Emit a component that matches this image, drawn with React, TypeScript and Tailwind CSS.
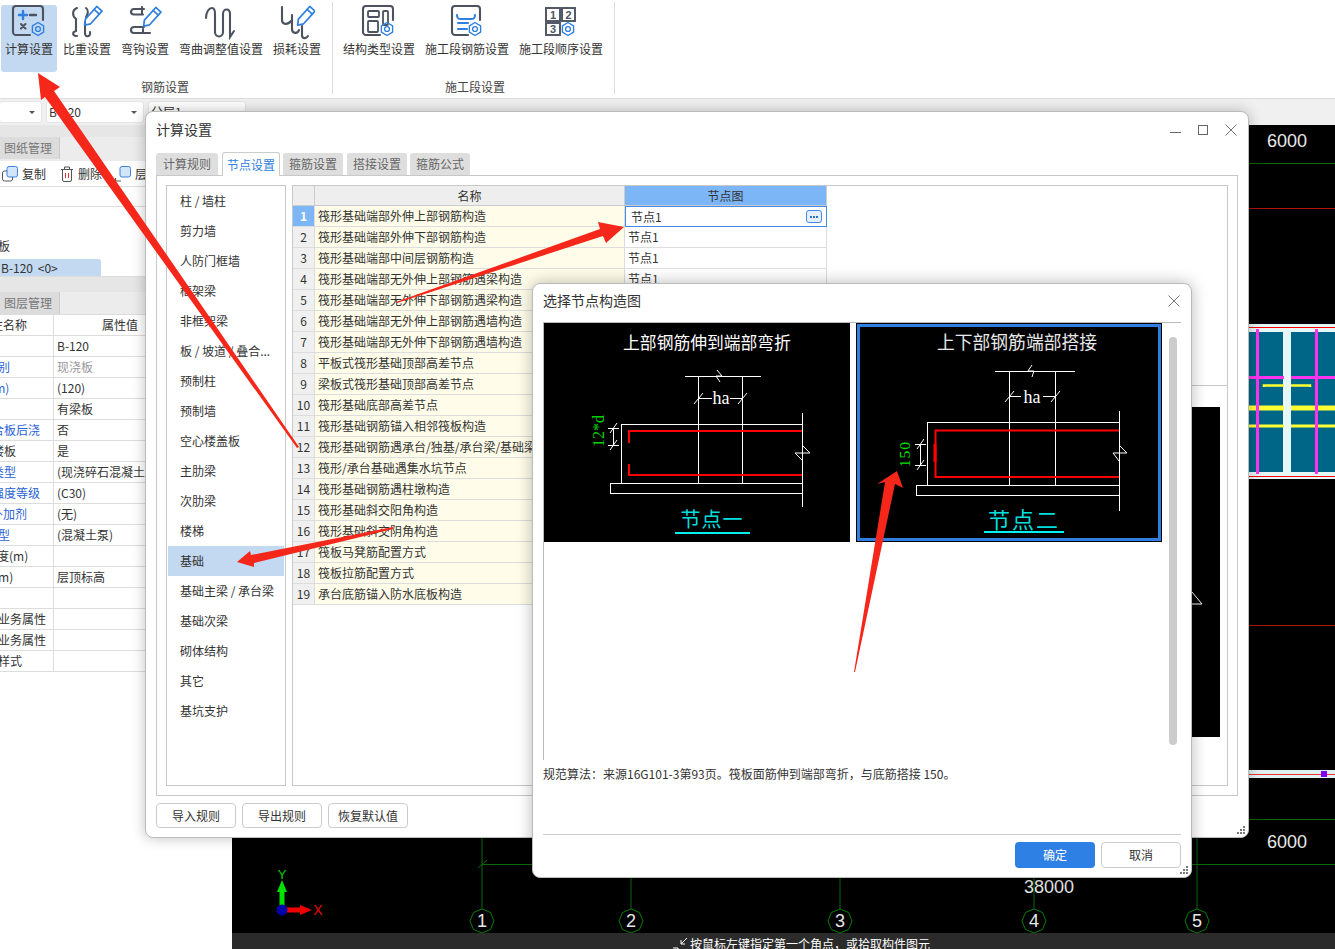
import React from 'react';

const STROKE = '#4d5261';
const BLUE = '#2f7fe0';

const Gear: React.FC<{ x: number; y: number }> = ({ x, y }) => (
    <g transform={`translate(${x} ${y})`} fill="none" stroke={BLUE} strokeWidth="1.4">
        <polygon points="0,-6.5 5.6,-3.2 5.6,3.2 0,6.5 -5.6,3.2 -5.6,-3.2" strokeLinejoin="round" />
        <circle r="2.4" />
    </g>
);

const Pencil: React.FC<{ x: number; y: number }> = ({ x, y }) => (
    <g transform={`translate(${x} ${y}) rotate(42)`} fill="none" stroke={BLUE} strokeWidth="1.7" strokeLinejoin="round">
        <path d="M-3.5 -11 L3.5 -11 L3.5 6 L0 11 L-3.5 6 Z" />
        <path d="M-3.5 -7 L3.5 -7" />
    </g>
);

const Svg: React.FC<{ children: React.ReactNode }> = ({ children }) => (
    <svg width="36" height="36" viewBox="0 0 36 36" fill="none" stroke={STROKE} strokeWidth="2.1" strokeLinecap="round">
        {children}
    </svg>
);

const CalcIcon = () => (
    <Svg>
        <path d="M19 30 H5 a3 3 0 0 1 -3 -3 V4 a3 3 0 0 1 3 -3 H29 a3 3 0 0 1 3 3 V15" />
        <path d="M8 10 H16 M12 6 V14" stroke={BLUE} strokeWidth="2.4" />
        <path d="M19 10 H25" strokeWidth="2.4" />
        <path d="M10 19 L14.5 23.5 M14.5 19 L10 23.5" />
        <Gear x={27} y={24} />
    </Svg>
);

const WeightIcon = () => (
    <Svg>
        <path d="M8 3 C3 5 3 11 7 14 V26 C3 27 3 31 8 31" />
        <path d="M17 3 C20 5 19 9 17 12 M16 17 V28 C16 33 22 32 21 27" />
        <Pencil x={23} y={12} />
    </Svg>
);

const HookIcon = () => (
    <Svg>
        <path d="M17 4 H7 C3 4 3 9.5 7 9.5 H16 M15 2 V9" />
        <path d="M17 22 H7 C3 22 3 28 7 28 H23 M16 24 V28" />
        <Pencil x={24} y={13} />
    </Svg>
);

const BendIcon = () => (
    <Svg>
        <path d="M3 13 C3 7 6 3 9 3 C12 3 12 7 12 9 V27 C12 33 20 33 20 27 V9 C20 3 27 3 27 9 V32 L31 26" />
    </Svg>
);

const LossIcon = () => (
    <Svg>
        <path d="M3 2 V15 C3 20 9 20 12 16 M13 10 V24 C13 29 19 29 20 25 M23 21 V30 C23 34 27 34 29 31" />
        <Pencil x={26} y={12} />
    </Svg>
);

const StructIcon = () => (
    <Svg>
        <path d="M19 30 H5 a3 3 0 0 1 -3 -3 V4 a3 3 0 0 1 3 -3 H29 a3 3 0 0 1 3 3 V15" />
        <rect x="7" y="6" width="11" height="6" rx="1" strokeWidth="1.8" />
        <rect x="22" y="6" width="5" height="14" rx="1" strokeWidth="1.8" />
        <rect x="7" y="16" width="10" height="11" rx="1" strokeWidth="1.8" />
        <Gear x={26} y={24} />
    </Svg>
);

const SegmentIcon = () => (
    <Svg>
        <path d="M19 30 H6 a3 3 0 0 1 -3 -3 V4 a3 3 0 0 1 3 -3 H28 a3 3 0 0 1 3 3 V15" />
        <path d="M8 10 C8 14 10 14 12 14 H22 C24 14 26 14 26 10" stroke={BLUE} />
        <path d="M9 18 H19 M9 24 H18" stroke={BLUE} />
        <Gear x={26} y={24} />
    </Svg>
);

const OrderIcon = () => (
    <Svg>
        <g strokeWidth="1.9" strokeLinecap="butt">
            <rect x="3" y="3" width="14" height="13" />
            <rect x="19" y="3" width="13" height="13" />
            <rect x="3" y="18" width="14" height="12" />
        </g>
        <g fill={STROKE} stroke="none" fontSize="11" fontWeight="700" textAnchor="middle" fontFamily="'Liberation Sans', sans-serif">
            <text x="10" y="13.5">1</text>
            <text x="25.5" y="13.5">2</text>
            <text x="10" y="28">3</text>
        </g>
        <Gear x={25} y={24} />
    </Svg>
);

const RibbonButton: React.FC<{ label: string; active?: boolean; icon: React.ReactNode }> = ({ label, active, icon }) => (
    <div className={`flex h-[67px] flex-col items-center rounded-[3px] px-1 ${active ? 'bg-[#c2d9f1]' : ''}`}>
        <div className="flex h-[36px] items-center justify-center">{icon}</div>
        <span className="text-[12px] leading-4 whitespace-nowrap text-[#333]">{label}</span>
    </div>
);

const RibbonGroup: React.FC<{ label: string; children: React.ReactNode }> = ({ label, children }) => (
    <div className="flex flex-col pt-[5px]">
        <div className="flex gap-[2px]">{children}</div>
        <div className="mt-[7px] pl-[4px] text-center text-[12px] leading-4 text-[#444]">{label}</div>
    </div>
);

const Ribbon = () => (
    <div className="flex h-[98px] bg-white pl-[1px]">
        <RibbonGroup label="钢筋设置">
            <RibbonButton label="计算设置" active icon={<CalcIcon />} />
            <RibbonButton label="比重设置" icon={<WeightIcon />} />
            <RibbonButton label="弯钩设置" icon={<HookIcon />} />
            <RibbonButton label="弯曲调整值设置" icon={<BendIcon />} />
            <RibbonButton label="损耗设置" icon={<LossIcon />} />
        </RibbonGroup>
        <div className="mx-[7px] mt-[2px] h-[92px] w-px bg-[#ddd]" />
        <div className="mr-[-1px]" />
        <RibbonGroup label="施工段设置">
            <RibbonButton label="结构类型设置" icon={<StructIcon />} />
            <RibbonButton label="施工段钢筋设置" icon={<SegmentIcon />} />
            <RibbonButton label="施工段顺序设置" icon={<OrderIcon />} />
        </RibbonGroup>
        <div className="mx-[7px] mt-[2px] h-[92px] w-px bg-[#ddd]" />
    </div>
);

const SelectBox: React.FC<{ text: string; width: string }> = ({ text, width }) => (
    <div className={`flex h-[22px] items-center justify-between rounded-[3px] border border-[#e4e4e4] bg-white pr-[6px] pl-[2px] text-[12px] text-[#333] ${width}`}>
        <span>{text}</span>
        <span className="h-0 w-0 border-x-[3px] border-t-[3px] border-x-transparent border-t-[#555]" />
    </div>
);

const Toolbar = () => (
    <div className="flex h-[27px] items-start gap-[4px] border-t border-[#ddd] bg-[#f0f0f0] pt-[2px]">
        <SelectBox text="" width="w-[43px] -ml-px" />
        <SelectBox text="B-120" width="w-[98px]" />
        <SelectBox text="分层1" width="w-[98px]" />
    </div>
);

const attrRows: { label: string; labelClass: string; blue?: boolean; value: string; gray?: boolean }[] = [
    { label: '', labelClass: '', value: 'B-120' },
    { label: '类别', labelClass: '-ml-[14px]', blue: true, value: '现浇板', gray: true },
    { label: '厚度(mm)', labelClass: '-ml-[45px]', blue: true, value: '(120)' },
    { label: '', labelClass: '', value: '有梁板' },
    { label: '叠合板后浇', labelClass: '-ml-[20px]', blue: true, value: '否' },
    { label: '楼板', labelClass: '-ml-[8px]', value: '是' },
    { label: '类型', labelClass: '-ml-[8px]', blue: true, value: '(现浇碎石混凝土' },
    { label: '强度等级', labelClass: '-ml-[8px]', blue: true, value: '(C30)' },
    { label: '外加剂', labelClass: '-ml-[9px]', blue: true, value: '(无)' },
    { label: '泵型', labelClass: '-ml-[14px]', blue: true, value: '(混凝土泵)' },
    { label: '高度(m)', labelClass: '-ml-[15px]', value: '' },
    { label: '标高(m)', labelClass: '-ml-[30px]', value: '层顶标高' },
    { label: '', labelClass: '', value: '' },
    { label: '业务属性', labelClass: '-ml-[2px]', value: '' },
    { label: '业务属性', labelClass: '-ml-[2px]', value: '' },
    { label: '样式', labelClass: '-ml-[2px]', value: '' },
];

const LeftPanel = () => (
    <div className="flex w-[232px] shrink-0 flex-col bg-white text-[12px] text-[#333]">
        <div className="h-[12px] bg-[#e6e6e6]" />
        <div className="h-[24px] bg-[#ececec]">
            <div className="flex h-[22px] w-[60px] items-center border-r border-[#ccc] bg-[#dcdcdc] pl-[4px] text-[#777]">图纸管理</div>
        </div>
        <div className="flex h-[26px] items-center border-b border-[#ddd]">
            <svg className="ml-[2px]" width="16" height="16" viewBox="0 0 16 16">
                <rect x="0.5" y="5" width="10" height="10" rx="2" fill="#fff" stroke="#555" />
                <rect x="5" y="0.5" width="10.5" height="10.5" rx="2" fill="#d2e5fb" stroke="#3b82d8" />
            </svg>
            <span className="ml-[4px]">复制</span>
            <svg className="ml-[14px]" width="14" height="16" viewBox="0 0 14 16" fill="none" stroke="#555">
                <path d="M1 3.5 H13 M4.5 3 V1 H9.5 V3 M2.5 4 V14 a1.5 1.5 0 0 0 1.5 1.5 H10 a1.5 1.5 0 0 0 1.5 -1.5 V4" />
                <path d="M5.5 7 V12 M8.5 7 V12" stroke="#d33" />
            </svg>
            <span className="ml-[4px]">删除</span>
            <svg className="ml-[13px]" width="16" height="16" viewBox="0 0 16 16">
                <path d="M0.5 12 V15 H6" fill="none" stroke="#555" />
                <rect x="5" y="0.5" width="10.5" height="10.5" rx="2" fill="#d2e5fb" stroke="#3b82d8" />
            </svg>
            <span className="ml-[4px]">层</span>
        </div>
        <div className="h-[20px] border-b border-[#ddd]" />
        <div className="flex h-[69px] flex-col justify-end">
            <div className="mb-[5px] -ml-[2px] leading-4">板</div>
            <div className="flex h-[17px] w-[101px] items-center rounded-tr-[3px] bg-[#c2d9f1]">
                <span className="ml-[1px] whitespace-nowrap [word-spacing:2px]">B-120 &lt;0&gt;</span>
            </div>
        </div>
        <div className="h-[16px] border-t border-[#ddd] bg-[#e6e6e6]" />
        <div className="h-[22px] bg-[#ececec]">
            <div className="flex h-[22px] w-[60px] items-center border-r border-[#ccc] bg-[#dcdcdc] pl-[4px] text-[#777]">图层管理</div>
        </div>
        <div className="flex h-[22px] border-y border-[#ddd]">
            <div className="flex w-[54px] items-center overflow-hidden border-r border-[#ddd]">
                <span className="-ml-[21px] whitespace-nowrap">属性名称</span>
            </div>
            <div className="flex w-[118px] items-center pl-[48px]">属性值</div>
        </div>
        {attrRows.map((r, i) => (
            <div key={i} className="flex h-[21px] border-b border-[#ddd]">
                <div className="flex w-[54px] items-center overflow-hidden border-r border-[#ddd]">
                    <span className={`whitespace-nowrap ${r.labelClass} ${r.blue ? 'text-[#2a62d8]' : ''}`}>{r.label}</span>
                </div>
                <div className={`flex items-center pl-[3px] whitespace-nowrap ${r.gray ? 'text-[#999]' : ''}`}>{r.value}</div>
            </div>
        ))}
    </div>
);

const Bubble: React.FC<{ x: number; n: number; top: number }> = ({ x, n, top }) => (
    <g>
        <path d={`M${x} ${top} V909`} stroke="#0a6a0a" />
        <polygon
            points={`${x},909 ${x + 8.5},912.5 ${x + 12},921 ${x + 8.5},929.5 ${x},933 ${x - 8.5},929.5 ${x - 12},921 ${x - 8.5},912.5`}
            fill="#000"
            stroke="#0a7a0a"
        />
        <text x={x} y={927} textAnchor="middle" fontSize="18" fill="#e8e8e8" fontFamily="'Liberation Sans', sans-serif">{n}</text>
    </g>
);

const CanvasDrawing = () => (
    <svg className="block h-[808px] w-full" viewBox="232 125 1103 808">
        <rect x="232" y="125" width="1103" height="808" fill="#000" />
        <g fontFamily="'Liberation Sans', sans-serif" fontSize="18" fill="#e8e8e8">
            <text x="1267" y="147">6000</text>
            <text x="1267" y="848">6000</text>
            <text x="1024" y="893">38000</text>
        </g>
        <path d="M1249 163.5 H1335 M1249 819.5 H1335 M482 864.5 H1335" stroke="#0a6a0a" />
        <path d="M478 868 L487 860" stroke="#0a6a0a" />
        <path d="M1249 208.5 H1335 M1249 625.5 H1335" stroke="#b01010" />
        {/* beam band */}
        <rect x="1249" y="324" width="86" height="155" fill="#e6f7f7" />
        <rect x="1249" y="332" width="34" height="140" fill="#006688" />
        <rect x="1291" y="332" width="44" height="140" fill="#006688" />
        <path d="M1249 327.5 H1335 M1249 476.5 H1335" stroke="#f00" />
        <path d="M1249 377.5 H1335" stroke="#ff33ee" strokeWidth="3" />
        <path d="M1264 387 V385.5 H1310 V387" fill="none" stroke="#ffff33" strokeWidth="2.5" />
        <path d="M1249 408 H1335" stroke="#ffff33" strokeWidth="5" />
        <path d="M1249 426 H1335" stroke="#ffff33" strokeWidth="3" />
        <rect x="1284" y="332" width="7" height="140" fill="#e6f7f7" />
        <path d="M1257.5 329 V474 M1316.5 329 V474" stroke="#ff33ee" strokeWidth="3" />
        {/* lower band */}
        <rect x="1249" y="770" width="86" height="8" fill="#dff0f0" />
        <path d="M1249 774.5 H1335" stroke="#f03030" />
        <rect x="1321" y="771" width="6" height="6" fill="#8000ff" />
        <Bubble x={482} n={1} top={838} />
        <Bubble x={631} n={2} top={878} />
        <Bubble x={840} n={3} top={878} />
        <Bubble x={1034} n={4} top={878} />
        <Bubble x={1197} n={5} top={838} />
        {/* axes */}
        <path d="M282 910 V888" stroke="#00e000" strokeWidth="5" />
        <polygon points="282,880 277,892 287,892" fill="#00e000" />
        <path d="M282 910 H304" stroke="#f00000" strokeWidth="5" />
        <polygon points="312,910 300,905 300,915" fill="#f00000" />
        <circle cx="282" cy="910" r="5.5" fill="#0000a8" />
        <text x="282" y="879" textAnchor="middle" fontSize="13" fill="#00d000" fontFamily="'Liberation Sans', sans-serif">Y</text>
        <text x="318" y="915" textAnchor="middle" fontSize="14" fill="#f00000" fontFamily="'Liberation Sans', sans-serif">X</text>
    </svg>
);

const tabs = [
    { label: '计算规则', cls: 'w-[62px]' },
    { label: '节点设置', cls: 'ml-[4px] w-[58px]' },
    { label: '箍筋设置', cls: 'ml-[3px] w-[60px]' },
    { label: '搭接设置', cls: 'ml-[4px] w-[60px]' },
    { label: '箍筋公式', cls: 'ml-[3px] w-[60px]' },
];
const categories = ['柱 / 墙柱', '剪力墙', '人防门框墙', '框架梁', '非框架梁', '板 / 坡道 / 叠合...', '预制柱', '预制墙', '空心楼盖板', '主肋梁', '次肋梁', '楼梯', '基础', '基础主梁 / 承台梁', '基础次梁', '砌体结构', '其它', '基坑支护'];
const nodes = [
    '筏形基础端部外伸上部钢筋构造', '筏形基础端部外伸下部钢筋构造', '筏形基础端部中间层钢筋构造', '筏形基础端部无外伸上部钢筋遇梁构造',
    '筏形基础端部无外伸下部钢筋遇梁构造', '筏形基础端部无外伸上部钢筋遇墙构造', '筏形基础端部无外伸下部钢筋遇墙构造', '平板式筏形基础顶部高差节点',
    '梁板式筏形基础顶部高差节点', '筏形基础底部高差节点', '筏形基础钢筋锚入相邻筏板构造', '筏形基础钢筋遇承台/独基/承台梁/基础梁构造',
    '筏形/承台基础遇集水坑节点', '筏形基础钢筋遇柱墩构造', '筏形基础斜交阳角构造', '筏形基础斜交阴角构造', '筏板马凳筋配置方式', '筏板拉筋配置方式', '承台底筋锚入防水底板构造',
];

const CloseX: React.FC<{ size?: number }> = ({ size = 12 }) => (
    <svg width={size} height={size} viewBox="0 0 12 12" stroke="#777" strokeWidth="1">
        <path d="M0.5 0.5 L11.5 11.5 M11.5 0.5 L0.5 11.5" />
    </svg>
);

const Grip = () => (
    <svg className="absolute right-[2px] bottom-[2px]" width="9" height="9" viewBox="0 0 9 9" fill="#777">
        <rect x="6" y="0" width="2" height="2" />
        <rect x="3" y="3" width="2" height="2" />
        <rect x="6" y="3" width="2" height="2" />
        <rect x="0" y="6" width="2" height="2" />
        <rect x="3" y="6" width="2" height="2" />
        <rect x="6" y="6" width="2" height="2" />
    </svg>
);

const FooterButton: React.FC<{ label: string; primary?: boolean }> = ({ label, primary }) => (
    <button className={`flex w-[80px] items-center justify-center rounded-[4px] text-[12px] ${primary ? 'bg-[#2f80e4] text-white' : 'border border-[#ccc] bg-white text-[#333]'}`}>
        {label}
    </button>
);

const NodeTable = () => (
    <div className="w-[534px] shrink-0 text-[12px] text-[#333]">
        <div className="flex h-[20px]">
            <div className="w-[22px] border-r border-b border-[#ccc] bg-[#eee]" />
            <div className="flex w-[310px] items-center justify-center border-r border-b border-[#ccc] bg-[#eee]">名称</div>
            <div className="flex w-[202px] items-center justify-center border-r border-b border-[#ccc] bg-[#7db6f6]">节点图</div>
        </div>
        {nodes.map((name, i) => (
            <div key={name} className="flex h-[21px]">
                <div className={`flex w-[22px] items-center justify-center border-r border-b border-[#ddd] ${i === 0 ? 'bg-[#7db6f6] font-bold text-white' : 'bg-[#f0f0f0]'}`}>{i + 1}</div>
                <div className="flex w-[310px] items-center overflow-hidden border-r border-b border-[#ddd] bg-[#fffde9] pl-[3px] whitespace-nowrap">{name}</div>
                {i === 0 ? (
                    <div className="flex w-[202px] items-center justify-between border border-[#3f8ae6] bg-white pr-[4px] pl-[5px]">
                        <span>节点1</span>
                        <span className="flex h-[13px] w-[16px] items-center justify-center gap-px rounded-[3px] border border-[#3f8ae6] bg-[#e6f0fc]">
                            <span className="h-[2px] w-[2px] bg-[#2f6fc0]" />
                            <span className="h-[2px] w-[2px] bg-[#2f6fc0]" />
                            <span className="h-[2px] w-[2px] bg-[#2f6fc0]" />
                        </span>
                    </div>
                ) : (
                    <div className="flex w-[202px] items-center border-r border-b border-[#ddd] bg-white pl-[3px]">节点1</div>
                )}
            </div>
        ))}
    </div>
);

const SettingsDialog = () => (
    <div className="absolute top-[111px] left-[145px] flex h-[727px] w-[1104px] flex-col rounded-[8px] border border-[#bbb] bg-white px-[10px] text-[12px] text-[#333] shadow-[0_0_14px_rgba(0,0,0,0.25)]">
        <div className="flex h-[35px] shrink-0 items-center justify-between pr-[1px]">
            <span className="text-[14px]">计算设置</span>
            <div className="flex items-center gap-[17px]">
                <span className="mt-[6px] h-px w-[11px] bg-[#666]" />
                <span className="h-[10px] w-[10px] border border-[#666]" />
                <CloseX />
            </div>
        </div>
        <div className="flex h-[28px] shrink-0 items-end">
            {tabs.map((t, i) => (
                <div
                    key={t.label}
                    className={
                        i === 1
                            ? `relative top-px z-10 flex h-[24px] items-center justify-center rounded-t-[3px] border-x border-t border-[#ccc] bg-white text-[#2f7fe0] ${t.cls}`
                            : `flex h-[22px] items-center justify-center rounded-t-[3px] bg-[#dedede] text-[#666] ${t.cls}`
                    }
                >
                    {t.label}
                </div>
            ))}
        </div>
        <div className="flex h-[621px] shrink-0 gap-[6px] border border-[#c8c8c8] p-[9px]">
            <div className="flex w-[120px] shrink-0 flex-col border border-[#c8c8c8] px-px">
                {categories.map(c => (
                    <div key={c} className={`flex h-[30px] shrink-0 items-center pl-[12px] whitespace-nowrap ${c === '基础' ? 'bg-[#c2d9f1]' : ''}`}>{c}</div>
                ))}
            </div>
            <div className="flex flex-1 border border-[#c8c8c8]">
                <NodeTable />
                <div className="flex flex-1 flex-col">
                    <div className="h-[200px] border-b border-[#c8c8c8]" />
                    <div className="mt-[21px] mr-[7px] ml-[13px] h-[330px] bg-black">
                        <svg className="block h-full w-full" viewBox="840 408 380 330">
                            <path d="M1192 593 L1202 605 H1192" fill="none" stroke="#fff" />
                        </svg>
                    </div>
                </div>
            </div>
        </div>
        <div className="mt-[7px] flex h-[25px] shrink-0 gap-[6px]">
            <FooterButton label="导入规则" />
            <FooterButton label="导出规则" />
            <FooterButton label="恢复默认值" />
        </div>
        <Grip />
    </div>
);

const serif = "'Liberation Serif', serif";
const cjk = "'Noto Sans CJK SC', sans-serif";

// 节点示意图，坐标以图片左上角为原点
const NodeOne = () => (
    <svg className="block" width="306" height="219" viewBox="0 0 306 219">
        <rect width="306" height="219" fill="#000" />
        <text x="163" y="26" textAnchor="middle" fontSize="16.8" fill="#fff" fontFamily={cjk}>上部钢筋伸到端部弯折</text>
        <g stroke="#fff" fill="none">
            <path d="M141 53.5 H217 M154.5 53 V160 M198.5 53 V160" />
            <path d="M173 47 L178 53 L172 53 L176 59" />
            <path d="M155 75.5 H168 M186 75.5 H198 M150 81 L159 70 M194 81 L203 70" />
            <rect x="77.5" y="101.5" width="181" height="59" />
            <rect x="66.5" y="160.5" width="192" height="10" />
            <path d="M258.5 90 V184" />
            <path d="M258 122 L266 130 H251 L258 137" />
            <path d="M69.5 105 V122 M64 105.5 H75 M64 122.5 H75 M66 110 L73 100 M66 127 L73 117" />
        </g>
        <text x="177" y="81" textAnchor="middle" fontSize="18" fill="#fff" fontFamily={serif}>ha</text>
        <path d="M85 120 V108 H258 M85 141 V152 H258" fill="none" stroke="#f00" strokeWidth="2" />
        <text transform="translate(60 108) rotate(-90)" textAnchor="middle" fontSize="16" fill="#00d000" fontFamily={serif}>12*d</text>
        <text x="168" y="204" textAnchor="middle" fontSize="20" letterSpacing="1" fill="#00dede" fontFamily={cjk}>节点一</text>
        <path d="M131 210 H206" stroke="#00f0f0" strokeWidth="2" />
    </svg>
);

const NodeTwo = () => (
    <svg className="block" width="306" height="219" viewBox="0 0 306 219">
        <rect width="306" height="219" fill="#000" />
        <rect x="2.5" y="2.5" width="301" height="214" fill="none" stroke="#2f7fe0" strokeWidth="3" />
        <text x="161" y="26" textAnchor="middle" fontSize="17.8" fill="#e8e8e8" fontFamily={cjk}>上下部钢筋端部搭接</text>
        <g stroke="#fff" fill="none">
            <path d="M139 48.5 H219 M153.5 48 V162 M199.5 48 V162" />
            <path d="M176 42 L172 48 L178 48 L176 54" />
            <path d="M154 73.5 H165 M187 73.5 H199 M149 79 L158 68 M195 79 L204 68" />
            <rect x="71.5" y="99.5" width="192" height="63" />
            <rect x="60.5" y="162.5" width="203" height="10" />
            <path d="M263.5 88 V188" />
            <path d="M263 122 L271 130 H257 L263 138" />
            <path d="M64.5 121 V142 M59 121.5 H70 M59 142.5 H70 M61 126 L68 116 M61 147 L68 137" />
        </g>
        <text x="176" y="80" textAnchor="middle" fontSize="18" fill="#fff" fontFamily={serif}>ha</text>
        <path d="M263 107.5 H79.5 V154 H263" fill="none" stroke="#f00" strokeWidth="2" />
        <path d="M79 121 V139" stroke="#f00" strokeWidth="3" />
        <text transform="translate(54 131) rotate(-90)" textAnchor="middle" fontSize="15.5" letterSpacing="1" fill="#00e000" fontFamily={serif}>150</text>
        <text x="168" y="205" textAnchor="middle" fontSize="22" letterSpacing="2" fill="#00dede" fontFamily={cjk}>节点二</text>
        <path d="M128 209 H208" stroke="#00f0f0" strokeWidth="2" />
    </svg>
);

const NodePickerDialog = () => (
    <div className="absolute top-[283px] left-[532px] z-10 flex h-[595px] w-[660px] flex-col rounded-[8px] border border-[#bbb] bg-white px-[10px] text-[12px] text-[#333] shadow-[0_0_16px_rgba(0,0,0,0.28)]">
        <div className="mb-[5px] flex h-[33px] shrink-0 items-center justify-between pr-[1px]">
            <span className="text-[14px]">选择节点构造图</span>
            <CloseX />
        </div>
        <div className="flex h-[438px] shrink-0 border-t border-l border-[#bbb]">
            <div className="flex h-[219px] gap-[6px]">
                <NodeOne />
                <NodeTwo />
            </div>
            <div className="mt-[14px] ml-[7px] h-[408px] w-[8px] rounded-full bg-[#ccc]" />
        </div>
        <div className="flex h-[28px] shrink-0 items-center whitespace-nowrap">规范算法：来源16G101-3第93页。筏板面筋伸到端部弯折，与底筋搭接 150。</div>
        <div className="mt-[46px] h-px shrink-0 bg-[#ccc]" />
        <div className="mt-[7px] flex h-[26px] shrink-0 justify-end gap-[6px]">
            <FooterButton label="确定" primary />
            <FooterButton label="取消" />
        </div>
        <Grip />
    </div>
);

// 截图上手工标注的红色箭头
const Annotations = () => (
    <svg className="pointer-events-none absolute inset-0 z-20" width="1335" height="949" viewBox="0 0 1335 949" fill="#f5261a">
        <polygon points="38,73 60,87 54,91 299,447 297,448 45,97 41,100" />
        <polygon points="624,227 606,243 603,236 397,303 396,302 600,229 598,222" />
        <polygon points="237,562 250,551 251,555 393,527 393,529 254,563 254,567" />
        <polygon points="897,471 903,488 895,484 855,672 854,672 885,482 877,484" />
    </svg>
);

export default function App() {
    return (
        <div className="relative h-[949px] w-[1335px] overflow-hidden bg-white font-['Noto_Sans_CJK_SC','Liberation_Sans',sans-serif]">
            <Ribbon />
            <Toolbar />
            <div className="flex h-[824px]">
                <LeftPanel />
                <div className="flex flex-1 flex-col bg-black">
                    <CanvasDrawing />
                    <div className="flex h-[16px] items-start overflow-hidden bg-[#2b2b2b] pt-[4px] pl-[441px] text-[12px] leading-[14px] text-white">
                        <svg className="mt-px mr-[2px]" width="15" height="14" viewBox="0 0 15 14" fill="none" stroke="#fff">
                            <path d="M0 10 H5 V14 M14 0 L8 6 M8 2 V6 H12" />
                        </svg>
                        <span className="whitespace-nowrap">按鼠标左键指定第一个角点，或拾取构件图元</span>
                    </div>
                </div>
            </div>
            <SettingsDialog />
            <NodePickerDialog />
            <Annotations />
        </div>
    );
}
